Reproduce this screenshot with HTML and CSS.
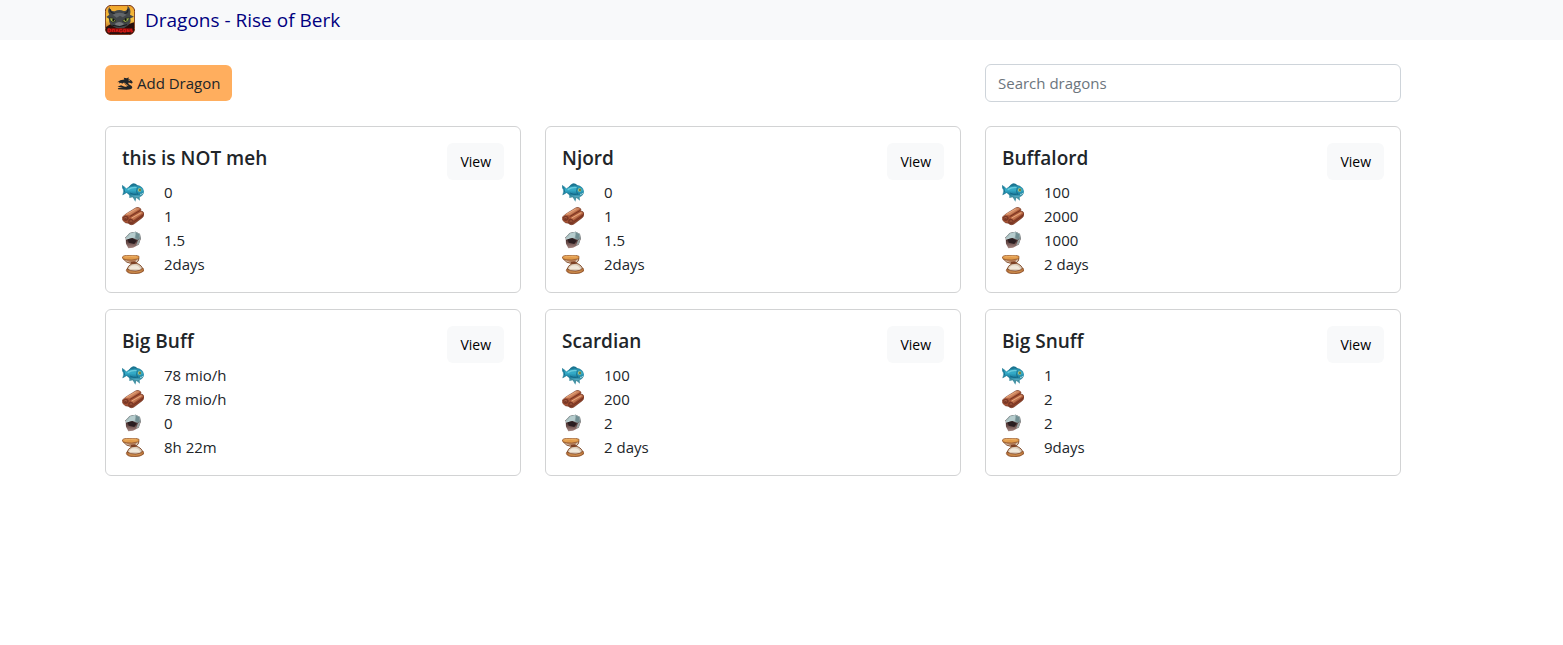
FILE: index.html
```html
<!DOCTYPE html>
<html lang="en">
<head>
<meta charset="utf-8">
<meta name="viewport" content="width=device-width, initial-scale=1">
<title>Dragons - Rise of Berk</title>
<link rel="stylesheet" href="styles.css">
</head>
<body>
<svg class="sprite" aria-hidden="true">
  <defs>
    <linearGradient id="scales" x1="0" y1="0" x2="0" y2="1"><stop offset="0" stop-color="#1f86a3"/><stop offset=".4" stop-color="#35aecb"/><stop offset=".75" stop-color="#1a7c9c"/><stop offset="1" stop-color="#6fc0cf"/></linearGradient>
    <linearGradient id="bark" x1="0" y1="0" x2="1" y2="1"><stop offset="0" stop-color="#c87852"/><stop offset=".5" stop-color="#a65334"/><stop offset="1" stop-color="#74301f"/></linearGradient>
    <linearGradient id="steel" x1="0" y1="0" x2="1" y2="1"><stop offset="0" stop-color="#7d9496"/><stop offset=".5" stop-color="#b9cdce"/><stop offset="1" stop-color="#5f7477"/></linearGradient>
    <linearGradient id="rust" x1="0" y1="0" x2="0" y2="1"><stop offset="0" stop-color="#2a1f22"/><stop offset=".5" stop-color="#4a2f2e"/><stop offset="1" stop-color="#a98a84"/></linearGradient>
    <linearGradient id="sky" x1="0" y1="0" x2="0" y2="1"><stop offset="0" stop-color="#f0a52a"/><stop offset=".5" stop-color="#f6c443"/><stop offset="1" stop-color="#8c3011"/></linearGradient>
  </defs>
  <symbol id="fish" viewBox="0 0 66 57">
    <path d="M19 16Q25 2 35 1Q43 1 48 10Z" fill="#1b7591"/>
    <path d="M22 35L22 45L32 43L40 56L43 44L54 53L52 36Z" fill="#4593a5"/>
    <path d="M0 7Q8 11 13 17Q24 7 38 6Q54 6 62 16L66 26Q63 39 51 43Q32 46 14 29L2 36Q6 25 4 20Q0 16 0 7Z" fill="url(#scales)" stroke="#17617a" stroke-width="1"/>
    <path d="M17 20Q29 12 44 14" fill="none" stroke="#69cbdc" stroke-width="4"/>
    <path d="M3 12Q8 18 8 28M24 30Q35 36 44 34M46 14Q41 24 47 35" fill="none" stroke="#0f5b79" stroke-width="2"/>
    <circle cx="53" cy="21" r="5" fill="#bdc261"/><circle cx="54" cy="21" r="2.5" fill="#182b30"/>
    <path d="M54 34Q60 35 64 30" stroke="#a8dce0" stroke-width="3" fill="none"/>
  </symbol>
  <symbol id="wood" viewBox="0 0 66 57">
    <path d="M2 29L13 20L42 2Q50 -1 57 6L56 12Q64 12 66 19Q67 27 61 32L36 51Q27 57 19 49Q9 49 3 41Q-1 34 2 29Z" fill="url(#bark)" stroke="#69301f" stroke-width="1.5"/>
    <path d="M9 23L42 4Q48 1 54 5L23 25Z" fill="#cd8660"/>
    <path d="M26 32L55 15Q61 14 63 19L33 40Z" fill="#c27550"/>
    <path d="M13 22L43 5M29 33L58 17" stroke="#e9a77c" stroke-width="3"/>
    <path d="M23 29L55 10M36 44L64 24" stroke="#6d2f1e" stroke-width="2.5"/>
    <path d="M3 31Q8 23 17 28Q23 33 18 39Q10 45 4 38Z" fill="#7b3825"/>
    <path d="M19 39Q25 32 33 38Q38 45 32 51Q23 55 18 47Z" fill="#7b3825"/>
    <path d="M7 33Q12 29 15 34M23 44Q27 38 31 44" stroke="#a96245" stroke-width="3" fill="none"/>
  </symbol>
  <symbol id="iron" viewBox="0 0 66 57">
    <path d="M11 19L23 6L41 2L54 9L56 24L50 41L33 50L19 52L12 38Z" fill="url(#rust)"/>
    <path d="M11 19L23 6L41 2L54 9L56 23L46 27L31 21L12 26Z" fill="url(#steel)"/>
    <path d="M24 8L39 4L38 20L18 21Z" fill="#b5cccd"/>
    <path d="M41 4L53 10L49 24L40 20Z" fill="#718f93"/>
    <path d="M48 27L56 22L51 39L42 44Z" fill="#9aa5a5"/>
    <path d="M17 25L31 22L44 29L37 39L20 35Z" fill="#2a1e21"/>
  </symbol>
  <symbol id="hourglass" viewBox="0 0 66 57">
    <path d="M4 12Q12 24 30 26Q17 32 15 44L62 45Q62 31 42 24Q50 20 51 10Z" fill="#d8cab8" stroke="#8a5433" stroke-width="3"/>
    <path d="M24 35Q37 27 49 34L57 44H20Z" fill="#f1e8da"/>
    <path d="M10 14L46 12Q42 20 33 22Q17 21 10 14Z" fill="#b98461"/>
    <path d="M25 21L40 19L44 26L30 28Z" fill="#7e4124"/>
    <path d="M1 6Q5 0 22 1Q43 -1 51 4Q53 9 47 12Q30 17 12 14Q-1 13 1 6Z" fill="#df9a4b" stroke="#8b4e25" stroke-width="2"/>
    <path d="M7 6Q25 3 44 6" stroke="#f0b267" stroke-width="3" fill="none"/>
    <path d="M15 41Q24 49 42 48Q56 48 62 39Q67 42 65 48Q55 57 36 56Q16 56 13 47Z" fill="#b8733a" stroke="#7b421f" stroke-width="2"/>
    <path d="M21 50Q40 55 59 48" stroke="#dda261" stroke-width="2" fill="none"/>
  </symbol>
</svg>

<header class="topbar">
  <div class="container">
    <a class="brand" href="#">
      <svg class="brand-logo" viewBox="0 0 90 90" aria-hidden="true">
        <rect x="1" y="1" width="88" height="88" rx="18" fill="url(#sky)" stroke="#75351d" stroke-width="3"/>
        <path d="M3 66L16 58L74 56L87 52V74Q86 87 74 87H16Q3 87 3 74Z" fill="#26100d"/>
        <path d="M13 6Q16 20 29 19Q42 12 56 18Q68 20 68 2Q80 14 75 29L87 35L76 40Q80 56 65 64Q49 78 28 66Q11 59 12 41L4 36L13 29Q6 18 13 6Z" fill="#424649"/>
        <path d="M15 12Q17 26 29 25M69 12Q69 25 58 25" stroke="#202427" stroke-width="4" fill="none"/>
        <path d="M23 29Q43 17 65 29L53 37L45 32L35 38Z" fill="#62666a"/>
        <path d="M14 38Q25 37 33 48Q23 55 16 48Z" fill="#9fb34b" stroke="#15191c" stroke-width="2"/>
        <path d="M52 48Q60 37 74 38Q71 50 61 52Z" fill="#9fb34b" stroke="#15191c" stroke-width="2"/>
        <ellipse cx="25" cy="45" rx="3" ry="4" fill="#111"/><ellipse cx="62" cy="44" rx="3" ry="4" fill="#111"/>
        <path d="M29 57Q43 45 57 57L50 63H35Z" fill="#74787b"/>
        <path d="M22 61Q44 69 66 59" stroke="#15191a" stroke-width="3" fill="none"/>
        <path d="M7 70H82V82H8Z" fill="#8d0c0a"/>
        <path d="M9 72V81H15L18 75L15 72ZM22 81V73H28V81M33 81L36 73L40 81M51 73H44V81H51V77M56 73H62V81H56ZM67 81V73L72 81V73M82 73H77V77H82V81H77" fill="none" stroke="#d91c16" stroke-width="3"/>
      </svg>
      <span>Dragons - Rise of Berk</span>
    </a>
  </div>
</header>

<main class="page">
  <div class="container">
    <div class="toolbar">
      <div>
        <button class="btn btn-add" type="button">
          <svg class="dragon-icon" viewBox="0 0 48 40" aria-hidden="true"><path d="M20 2L30 4L35 1L35 6L43 10L48 16L45 20L35 17Q32 21 38 24Q48 28 46 34Q43 39 29 39L3 38Q0 36 4 34L18 33L1 30L12 25L21 29Q30 31 31 28Q22 23 21 17L15 21L12 18L5 20L7 15L0 16Q8 8 22 8Z" fill="currentColor"/><path d="M34 9L40 12M23 18Q26 24 34 27" stroke="#ffae5e" stroke-width="2" fill="none"/></svg>
          Add Dragon
        </button>
      </div>
      <input class="search" type="search" placeholder="Search dragons" aria-label="Search dragons">
    </div>

    <div class="cards" id="cards"></div>
  </div>
</main>
<script src="app.js"></script>
</body>
</html>
```
FILE: styles.css
```css
* {
  box-sizing: border-box;
}

body {
  margin: 0;
  background: #fff;
  color: #212529;
  font-family: "Segoe UI", "Open Sans", "Noto Sans", sans-serif;
  font-size: 15px;
  line-height: 24px;
}

.sprite {
  position: absolute;
  width: 0;
  height: 0;
}

.topbar {
  background: #f8f9fa;
  padding: 5px 0;
}

.topbar,
.page {
  padding-right: 57px;
}

.container {
  max-width: 1296px;
  margin: 0 auto;
}

.brand {
  display: inline-flex;
  align-items: center;
  gap: 10px;
  color: #000080;
  font-size: 19px;
  line-height: 30px;
  text-decoration: none;
  vertical-align: top;
}

.brand-logo {
  width: 30px;
  height: 30px;
}

.toolbar,
.cards {
  display: grid;
  grid-template-columns: repeat(3, minmax(0, 1fr));
  column-gap: 24px;
}

.toolbar {
  align-items: center;
  padding: 24px 0;
}

.search {
  grid-column: 3;
  width: 100%;
  height: 38px;
  padding: 6px 12px;
  border: 1px solid #ced4da;
  border-radius: 6px;
  background: #fff;
  color: #212529;
  font: inherit;
  appearance: none;
}

.search::placeholder {
  color: #6c757d;
  opacity: 1;
}

.btn {
  display: inline-flex;
  align-items: center;
  border: 0;
  border-radius: 6px;
  padding: 6px 13px;
  font: inherit;
  font-size: 14px;
  cursor: pointer;
}

.btn-add {
  gap: 4px;
  padding: 6px 12px;
  background: #ffae5e;
  color: #212529;
  font-size: 15px;
}

.dragon-icon {
  width: 16px;
  height: 13px;
}

.cards {
  row-gap: 16px;
}

.card {
  border: 1px solid #d2d3d4;
  border-radius: 6px;
  padding: 16px;
}

.card-head {
  display: flex;
  align-items: flex-start;
  justify-content: space-between;
}

.card-title {
  margin: 0;
  font-size: 19px;
  font-weight: 600;
  line-height: 30px;
}

.btn-view {
  height: 37px;
  background: #f8f9fa;
  color: #000;
}

.stats {
  margin: 0;
  padding: 0;
  list-style: none;
}

.stats li {
  display: flex;
  align-items: center;
  gap: 20px;
}

.stat-icon {
  width: 22px;
  height: 19px;
}
```
FILE: app.js
```js
const dragons = [
  ["this is NOT meh", "0", "1", "1.5", "2days"],
  ["Njord", "0", "1", "1.5", "2days"],
  ["Buffalord", "100", "2000", "1000", "2 days"],
  ["Big Buff", "78 mio/h", "78 mio/h", "0", "8h 22m"],
  ["Scardian", "100", "200", "2", "2 days"],
  ["Big Snuff", "1", "2", "2", "9days"]
];
const icons = ["fish", "wood", "iron", "hourglass"];

document.getElementById("cards").innerHTML = dragons.map(([name, ...stats]) => `
  <article class="card">
    <div class="card-head">
      <h2 class="card-title">${name}</h2>
      <button class="btn btn-view" type="button">View</button>
    </div>
    <ul class="stats">
      ${stats.map((value, i) => `<li><svg class="stat-icon" role="img" aria-label="${icons[i]}"><use href="#${icons[i]}"/></svg><span>${value}</span></li>`).join("")}
    </ul>
  </article>`).join("");
```
